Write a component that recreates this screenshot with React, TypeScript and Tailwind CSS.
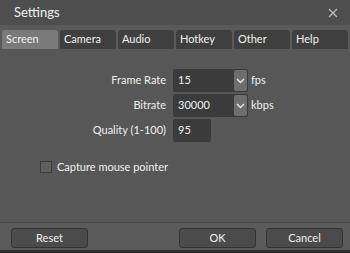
import React from "react";

const tabs = ["Screen", "Camera", "Audio", "Hotkey", "Other", "Help"];

function Chevron() {
  return (
    <svg width="9" height="6" viewBox="0 0 9 6">
      <path d="M1 1 L4.5 4.5 L8 1" stroke="#e8e8e8" strokeWidth="1.4" fill="none" />
    </svg>
  );
}

function Select({ value }: { value: string }) {
  return (
    <div className="flex h-[23px] w-[75px] items-stretch rounded-[2px] bg-[#3b3b3b]">
      <div className="flex flex-1 items-center pl-[5px] text-[11px] text-[#f0f0f0]">{value}</div>
      <div className="my-[1px] mr-[1px] flex w-[13px] items-center justify-center rounded-[2px] bg-[#6e6e6e]">
        <Chevron />
      </div>
    </div>
  );
}

function Button({ label }: { label: string }) {
  return (
    <div className="flex h-[20px] w-[77px] items-center justify-center rounded-[3px] border border-[#333] bg-[#4b4b4b] text-[11px] text-[#f0f0f0]">
      {label}
    </div>
  );
}

function Row({ label, children }: { label: string; children: React.ReactNode }) {
  return (
    <div className="flex items-center">
      <span className="w-[167px] pr-[1px] text-right text-[11px]">{label}</span>
      <div className="ml-[6px] flex items-center">{children}</div>
    </div>
  );
}

export default function App() {
  return (
    <div
      className="relative flex h-[253px] w-[350px] flex-col overflow-hidden bg-[#575757] text-[#f0f0f0]"
      style={{ fontFamily: 'Lato, "Open Sans", sans-serif' }}
    >
      <div className="flex h-[25px] items-center justify-between bg-[#4e4e4e] pl-[14px] pr-[12px]">
        <span className="text-[13px]">Settings</span>
        <svg width="10" height="10" viewBox="0 0 10 10">
          <path d="M1 1 L9 9 M9 1 L1 9" stroke="#bdbdbd" strokeWidth="1.2" />
        </svg>
      </div>
      <div className="flex h-[24px] items-end gap-[2px] bg-[#5a5a5a] px-[2px]">
        {tabs.map((t, i) => (
          <div
            key={t}
            className={
              "flex h-[19px] flex-1 items-center rounded-t-[3px] pl-[4px] text-[11px] " +
              (i === 0 ? "bg-[#7a7a7a]" : "bg-[#3f3f3f]")
            }
          >
            {t}
          </div>
        ))}
      </div>
      <div className="flex flex-1 flex-col">
        <div className="mt-[20px] flex flex-col gap-[2px]">
          <Row label="Frame Rate">
            <Select value="15" />
            <span className="ml-[3px] text-[11px]">fps</span>
          </Row>
          <Row label="Bitrate">
            <Select value="30000" />
            <span className="ml-[3px] text-[11px]">kbps</span>
          </Row>
          <Row label="Quality (1-100)">
            <div className="flex h-[23px] w-[38px] items-center rounded-[2px] bg-[#3b3b3b] pl-[5px] text-[11px]">95</div>
          </Row>
        </div>
        <div className="ml-[40px] mt-[17px] flex items-center gap-[5px]">
          <div className="h-[12px] w-[12px] border border-[#3a3a3a] bg-[#5e5e5e]" />
          <span className="text-[11px]">Capture mouse pointer</span>
        </div>
      </div>
      <div className="flex h-[28px] items-start justify-between border-t border-[#4a4a4a] bg-[#5b5b5b] pl-[11px] pr-[7px] pt-[5px]">
        <Button label="Reset" />
        <div className="flex gap-[10px]">
          <Button label="OK" />
          <Button label="Cancel" />
        </div>
      </div>
      <div className="h-[3px] bg-[#2e2e2e]" />
    </div>
  );
}
